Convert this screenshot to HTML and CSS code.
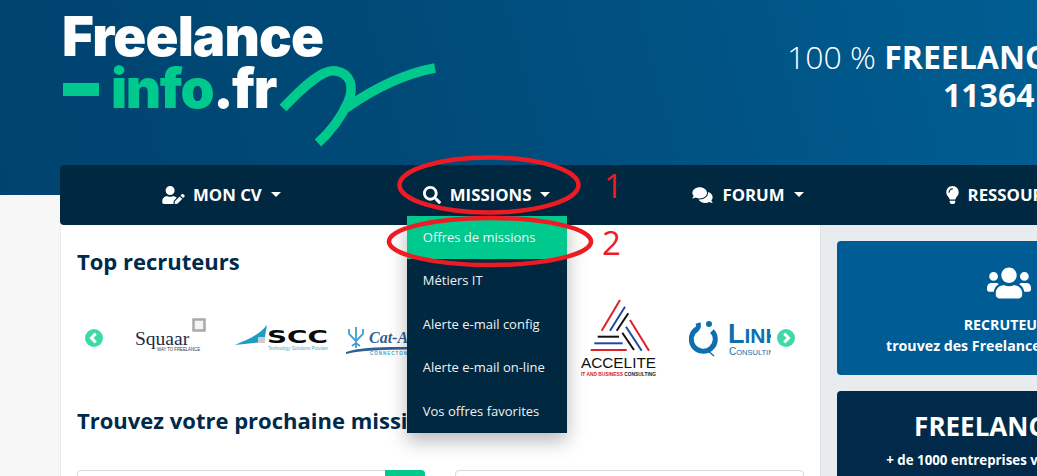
FILE: index.html
```html
<!DOCTYPE html>
<html lang="fr">
<head>
<meta charset="utf-8">
<title>Freelance-info.fr</title>
<link rel="stylesheet" href="styles.css">
</head>
<body>
<div class="page">
  <header class="top">
    <a class="logo" href="#">
      <span class="logo-line1">Freelance</span>
      <span class="logo-line2">
        <span class="logo-dash"></span><span class="logo-info">info</span><span class="logo-fr">.fr</span>
        <svg class="logo-swoosh" viewBox="0 0 160 86" fill="none" stroke="#00c98d" stroke-width="9.5">
          <path d="M5 46C25 25 45 6 58 9C74 12 76 26 70 40C63 56 52 70 40 81"/>
          <path d="M68 46C94 28 124 12 157 6"/>
        </svg>
      </span>
    </a>
    <div class="tagline">
      <div class="tag-l1">100 % <b>FREELANCE</b></div>
      <div class="tag-l2"><b>11364</b></div>
    </div>
  </header>

  <nav class="nav">
    <div class="nav-item">
      <svg class="ico ico-user" viewBox="0 0 640 512"><path d="M224 256c70.7 0 128-57.3 128-128S294.7 0 224 0 96 57.3 96 128s57.3 128 128 128zm89.6 32h-16.7c-22.2 10.2-46.9 16-72.9 16s-50.6-5.8-72.9-16h-16.7C60.2 288 0 348.2 0 422.4V464c0 26.5 21.5 48 48 48h274.9c-2.4-6.8-3.4-14-2.6-21.3l6.8-60.9 1.2-11.1 7.9-7.9 77.3-77.3c-24.5-27.7-60-45.5-99.9-45.5zm45.3 145.3l-6.8 61c-1.1 10.2 7.5 18.8 17.6 17.6l60.9-6.8 137.9-137.9-71.7-71.7-137.9 137.8zM633 268.9L595.1 231c-9.3-9.3-24.5-9.3-33.8 0l-37.8 37.8-4.1 4.1 71.8 71.7 41.8-41.8c9.3-9.4 9.3-24.5 0-33.9z"/></svg>
      <span>MON CV</span><i class="caret"></i>
    </div>
    <div class="nav-item nav-missions">
      <svg class="ico ico-search" viewBox="0 0 512 512"><path d="M505 442.7L405.3 343c-4.5-4.5-10.6-7-17-7H372c27.6-35.3 44-79.7 44-128C416 93.1 322.9 0 208 0S0 93.1 0 208s93.1 208 208 208c48.3 0 92.7-16.4 128-44v16.3c0 6.4 2.5 12.5 7 17l99.7 99.7c9.4 9.4 24.6 9.4 33.9 0l28.3-28.3c9.4-9.4 9.4-24.6.1-34zM208 336c-70.7 0-128-57.2-128-128 0-70.7 57.2-128 128-128 70.7 0 128 57.2 128 128 0 70.7-57.2 128-128 128z"/></svg>
      <span>MISSIONS</span><i class="caret"></i>
      <ul class="menu">
        <li class="menu-active">Offres de missions</li>
        <li>Métiers IT</li>
        <li>Alerte e-mail config</li>
        <li>Alerte e-mail on-line</li>
        <li>Vos offres favorites</li>
      </ul>
    </div>
    <div class="nav-item">
      <svg class="ico ico-forum" viewBox="0 0 576 512"><path d="M416 192c0-88.4-93.1-160-208-160S0 103.6 0 192c0 34.3 14.1 65.9 38 92-13.4 30.2-35.5 54.2-35.8 54.5-2.2 2.3-2.8 5.7-1.5 8.7S4.8 352 8 352c36.6 0 66.9-12.3 88.7-25 32.2 15.7 70.3 25 111.3 25 114.9 0 208-71.6 208-160zm122 220c23.9-26 38-57.7 38-92 0-66.9-53.5-124.2-129.3-148.1.9 6.6 1.3 13.3 1.3 20.1 0 105.9-107.7 192-240 192-10.8 0-21.3-.8-31.7-1.9C207.8 439.6 281.8 480 368 480c41 0 79.1-9.2 111.3-25 21.8 12.7 52.1 25 88.7 25 3.2 0 6.1-1.9 7.3-4.8 1.3-2.9.7-6.3-1.5-8.7-.3-.3-22.4-24.2-35.8-54.5z"/></svg>
      <span>FORUM</span><i class="caret"></i>
    </div>
    <div class="nav-item">
      <svg class="ico ico-bulb" viewBox="0 0 352 512"><path d="M96.06 454.35c.01 6.29 1.87 12.45 5.37 17.69l17.09 25.69a31.99 31.99 0 0 0 26.64 14.28h61.71a31.99 31.99 0 0 0 26.64-14.28l17.09-25.69a31.989 31.989 0 0 0 5.36-17.69l.04-38.35H96.01l.05 38.35zM0 176c0 44.37 16.45 84.85 43.56 115.78 16.52 18.85 42.36 58.23 52.21 91.45.04.26.07.52.11.78h160.24c.04-.26.07-.51.11-.78 9.85-33.22 35.69-72.6 52.21-91.45C335.55 260.85 352 220.37 352 176 352 78.61 272.91-.3 175.45 0 73.44.31 0 82.97 0 176zm176-80c-44.11 0-80 35.89-80 80 0 8.84-7.16 16-16 16s-16-7.16-16-16c0-61.76 50.24-112 112-112 8.84 0 16 7.16 16 16s-7.16 16-16 16z"/></svg>
      <span>RESSOURCES</span><i class="caret"></i>
    </div>
  </nav>

  <div class="content">
    <main class="panel">
      <h2 class="title">Top recruteurs</h2>
      <div class="carousel">
        <span class="arrow"><svg viewBox="0 0 18 18" fill="none" stroke="#fff" stroke-width="3"><path d="M10.8 4.6L6.4 9l4.4 4.4"/></svg></span>
        <div class="slides">
          <svg class="lg lg-squaar" viewBox="0 0 72 40">
            <rect x="58.5" y="1.5" width="11" height="11" fill="#f4f4f4" stroke="#a9a9a9" stroke-width="2.5"/>
            <text class="t-squaar" x="0" y="27">Squaar</text>
            <text class="t-squaar-s" x="22" y="33" textLength="43" lengthAdjust="spacingAndGlyphs">WAY TO FREELANCE</text>
          </svg>
          <svg class="lg lg-scc" viewBox="0 0 94 34">
            <path d="M0 25C14 19 24 15 32 5L29 22Z" fill="#1b9dc4"/>
            <rect x="23" y="17" width="7" height="6" fill="#ccc"/>
            <text class="t-scc" x="32" y="23" textLength="61" lengthAdjust="spacingAndGlyphs">SCC</text>
            <text class="t-scc-s" x="33" y="30" textLength="60" lengthAdjust="spacingAndGlyphs">Technology Solutions Provider</text>
          </svg>
          <svg class="lg lg-cat" viewBox="0 0 120 40" fill="none" stroke="#3f9fd0">
            <path d="M10 13V30M10 23L3 16V11M10 23L17 16V11M10 19V9M6 28L10 25L14 28" stroke-width="1.8"/>
            <path d="M0 34C20 27 60 29 120 30V32C60 31 20 31 0 36Z" fill="#2f5f96" stroke="none"/>
            <text class="t-cat" x="23" y="25">Cat-Amania</text>
            <text class="t-cat-s" x="24" y="37">CONNECTONS NOS TALENTS</text>
          </svg>
          <svg class="lg lg-acc" viewBox="0 0 78 78" fill="none" stroke-width="2">
            <path d="M40 1L21.7 31.7" stroke="#d9222a"/>
            <path d="M45 7.7L30 31.7" stroke="#1f4b9c"/>
            <path d="M48.3 14.3L36.7 31.7" stroke="#111"/>
            <path d="M50 21L69 51.7" stroke="#d9222a"/>
            <path d="M46 27.7L61.7 51.7" stroke="#1f4b9c"/>
            <path d="M42.3 33.7L54 51" stroke="#111"/>
            <path d="M17.7 37.7H39" stroke="#111"/>
            <path d="M14.3 44.3H42.7" stroke="#1f4b9c"/>
            <path d="M10.7 51H46.7" stroke="#d9222a"/>
            <text class="t-acc" x="1" y="69" textLength="75" lengthAdjust="spacingAndGlyphs">ACCELITE</text>
            <text class="t-acc-s" x="1" y="77" textLength="75" lengthAdjust="spacingAndGlyphs"><tspan class="t-red">IT AND BUSINESS</tspan> CONSULTING</text>
          </svg>
          <svg class="lg lg-link" viewBox="0 0 84 40" fill="none">
            <path d="M9 6C10 9 10 10 8 12A12 12 0 1 0 23 14" stroke="#0d6fae" stroke-width="5"/>
            <path d="M18 33L25 39" stroke="#0d6fae" stroke-width="1.5"/>
            <circle cx="20" cy="7" r="3" fill="#0d6fae"/>
            <text class="t-link" x="39" y="26">L<tspan class="t-link-m">INK</tspan></text>
            <text class="t-link-s" x="40" y="38">C<tspan class="t-link-n">ONSULTING</tspan></text>
          </svg>
        </div>
        <span class="arrow"><svg viewBox="0 0 18 18" fill="none" stroke="#fff" stroke-width="3"><path d="M7.2 4.6L11.6 9l-4.4 4.4"/></svg></span>
      </div>
      <h2 class="title title-2">Trouvez votre prochaine mission</h2>
      <div class="search">
        <div class="field"><span class="field-btn"></span></div>
        <div class="field field-wide"></div>
      </div>
    </main>
    <aside class="side">
      <section class="card card-blue">
        <svg class="ico-users" viewBox="0 0 640 512"><path d="M96 224c35.3 0 64-28.7 64-64s-28.7-64-64-64-64 28.7-64 64 28.7 64 64 64zm448 0c35.3 0 64-28.7 64-64s-28.7-64-64-64-64 28.7-64 64 28.7 64 64 64zm32 32h-64c-17.6 0-33.5 7.1-45.1 18.6 40.3 22.1 68.9 62 75.1 109.4h66c17.7 0 32-14.3 32-32v-32c0-35.3-28.7-64-64-64zm-256 0c61.9 0 112-50.1 112-112S381.9 32 320 32 208 82.1 208 144s50.1 112 112 112zm76.8 32h-8.3c-20.8 10-43.9 16-68.5 16s-47.6-6-68.5-16h-8.3C179.6 288 128 339.6 128 403.2V432c0 26.5 21.5 48 48 48h288c26.5 0 48-21.5 48-48v-28.8c0-63.6-51.6-115.2-115.2-115.2zm-223.7-13.4C161.5 263.1 145.6 256 128 256H64c-35.3 0-64 28.7-64 64v32c0 17.7 14.3 32 32 32h65.9c6.3-47.4 34.9-87.3 75.2-109.4z"/></svg>
        <p class="card-l1">RECRUTEURS</p>
        <p class="card-l2">trouvez des Freelances disponibles</p>
      </section>
      <section class="card card-dark">
        <p class="card-big">FREELANCES</p>
        <p class="card-l3">+ de 1000 entreprises vous attendent</p>
      </section>
    </aside>
  </div>

  <svg class="marks" viewBox="0 0 1037 476" fill="none">
    <ellipse cx="489" cy="185" rx="89.5" ry="27.5"/>
    <ellipse cx="490" cy="241.5" rx="101" ry="23.5"/>
    <text class="mark-n" x="604" y="198">1</text>
    <text class="mark-n" x="602" y="255">2</text>
  </svg>
</div>
</body>
</html>
```
FILE: styles.css
```css
* { box-sizing: border-box; }
html, body { margin: 0; padding: 0; }
body {
  background: #f7f7f7;
  font-family: "Open Sans", "Liberation Sans", sans-serif;
  color: #fff;
}
.page {
  position: relative;
  width: 1037px;
  height: 476px;
  overflow: hidden;
}

/* header */
.top {
  display: flex;
  height: 195px;
  padding: 10px 0 0 60px;
  background: linear-gradient(75deg, #00436f 0%, #004a78 40%, #005e92 100%);
}
.logo {
  display: flex;
  flex-direction: column;
  width: 380px;
  flex: none;
  text-decoration: none;
  font-family: Inter, "Liberation Sans", sans-serif;
  font-weight: 900;
  font-size: 54.5px;
  letter-spacing: -0.9px;
  line-height: 52px;
  color: #fff;
}
.logo-line1 { padding-left: 2px; }
.logo-line2 {
  display: flex;
  align-items: flex-start;
  padding-left: 3px;
  letter-spacing: -1.4px;
}
.logo-dash {
  width: 36px;
  height: 13px;
  flex: none;
  margin: 21px 12px 0 0;
  background: #00c98d;
}
.logo-info { color: #00c98d; }
.logo-fr { color: #fff; }
.logo-swoosh {
  width: 160px;
  height: 86px;
  margin-left: 2px;
  flex: none;
}
.tagline {
  margin: 28px 0 0 347px;
  font-size: 32px;
  line-height: 38px;
  font-weight: 300;
  white-space: nowrap;
}
.tagline b { font-weight: 700; }
.tag-l2 { padding-left: 156px; }

/* navigation */
.nav {
  position: relative;
  z-index: 2;
  display: flex;
  gap: 142px;
  width: 1200px;
  height: 60px;
  margin: -30px 0 0 60px;
  padding-left: 102px;
  background: #002840;
  border-radius: 4px;
}
.nav-item {
  position: relative;
  display: flex;
  align-items: center;
  height: 60px;
  padding-bottom: 1px;
  flex: none;
  font-size: 16.8px;
  font-weight: 700;
  white-space: nowrap;
}
.ico { fill: #fff; height: 18px; flex: none; }
.ico-user { width: 23px; margin-right: 8px; }
.ico-search { width: 18px; height: 18px; margin-right: 9px; }
.ico-forum { width: 21px; margin-right: 9px; }
.ico-bulb { width: 13px; margin-right: 9px; }
.caret {
  width: 0;
  height: 0;
  margin-left: 9px;
  border-left: 5px solid transparent;
  border-right: 5px solid transparent;
  border-top: 5px solid #fff;
}

/* dropdown */
.menu {
  position: absolute;
  top: 51px;
  left: -16px;
  width: 160px;
  margin: 0;
  padding: 0;
  list-style: none;
  background: #002840;
  box-shadow: 0 8px 18px rgba(0, 0, 0, .28);
  font-size: 13px;
  font-weight: 400;
}
.menu li {
  padding: 13px 16px;
  height: 43.4px;
  line-height: 17.4px;
  color: #f0f2f4;
}
.menu .menu-active { background: #00c98d; }

/* content */
.content {
  display: flex;
  width: 1138px;
  margin-left: 60px;
  height: 251px;
}
.panel {
  width: 760px;
  flex: none;
  background: #fff;
  border-left: 1px solid #e9ecef;
  padding: 22px 16px 0;
  overflow: hidden;
}
.title {
  margin: 0;
  font-size: 22px;
  line-height: 28px;
  font-weight: 700;
  color: #002a4a;
  white-space: nowrap;
}
.title-2 { margin-top: 20px; }

.carousel {
  display: flex;
  align-items: center;
  height: 96px;
  margin-top: 15px;
}
.arrow {
  width: 18px;
  height: 18px;
  flex: none;
  border-radius: 50%;
  background: #3fd8a8;
  display: flex;
}
.arrow:first-child { margin-left: 8px; }
.arrow:last-child { margin-left: 6px; }
.arrow svg { width: 18px; height: 18px; }
.slides {
  display: flex;
  align-items: center;
  width: 668px;
  height: 96px;
  flex: none;
  overflow: hidden;
  padding-left: 32px;
}
.lg { flex: none; display: block; }
.lg-squaar { width: 72px; height: 40px; margin-top: -1px; }
.lg-scc { width: 94px; height: 34px; margin-left: 28px; margin-top: -2px; }
.lg-cat { width: 120px; height: 40px; margin-left: 17px; margin-top: -1px; }
.lg-acc { width: 78px; height: 78px; margin-left: 114px; }
.lg-link { width: 84px; height: 40px; margin-left: 31px; margin-top: -2px; }

.t-squaar { font: 19.5px "Liberation Serif", serif; fill: #1d2b44; }
.t-squaar-s { font: 5px "Liberation Sans", sans-serif; fill: #33384a; }
.t-scc { font: 900 18px "DejaVu Sans", sans-serif; fill: #0a0a0a; }
.t-scc-s { font: 5px "Liberation Sans", sans-serif; fill: #3fa9d6; }
.t-cat { font: italic 700 16px "Liberation Serif", serif; fill: #2f5f96; stroke: none; }
.t-cat-s { font: 700 4.5px "Liberation Sans", sans-serif; fill: #3f9fd0; stroke: none; letter-spacing: 1px; }
.t-acc { font: 15.5px "Liberation Sans", sans-serif; fill: #111; stroke: none; }
.t-acc-s { font: 700 5px "Liberation Sans", sans-serif; fill: #222; stroke: none; }
.t-red { fill: #d9222a; }
.t-link { font: 700 27px "Liberation Sans", sans-serif; fill: #0d6fae; }
.t-link-m { font-size: 21px; }
.t-link-s { font: 10px "Liberation Sans", sans-serif; fill: #0d6fae; }
.t-link-n { font-size: 7.5px; }

.search {
  display: flex;
  gap: 30px;
  margin-top: 36px;
}
.field {
  position: relative;
  width: 348px;
  height: 40px;
  background: #fff;
  border: 1px solid #d8d8d8;
  border-radius: 4px;
  display: flex;
  justify-content: flex-end;
}
.field-wide { width: 349px; }
.field-btn {
  width: 40px;
  margin: -1px -1px 0 0;
  background: #00c98d;
  border-radius: 0 4px 4px 0;
}

/* sidebar */
.side {
  width: 378px;
  flex: none;
  background: #e9ecef;
  border-left: 1px solid #e0e3e6;
  padding: 16px 17px 0 16px;
  display: flex;
  flex-direction: column;
  gap: 16px;
}
.card {
  width: 344px;
  border-radius: 4px;
  text-align: center;
  flex: none;
}
.card p { margin: 0; white-space: nowrap; font-weight: 700; }
.card-blue { background: #005c94; height: 134px; padding-top: 24px; }
.card-dark { background: #012a4a; height: 180px; padding-top: 17px; }
.ico-users { width: 44px; height: 36px; fill: #fff; display: block; margin: 0 auto; }
.card .card-l1 { font-size: 14.2px; line-height: 20px; margin-top: 14px; }
.card .card-l2 { font-size: 14.2px; line-height: 22px; }
.card .card-big { font-size: 26px; line-height: 36px; padding-right: 30px; }
.card .card-l3 { font-size: 13.3px; line-height: 20px; margin-top: 6px; }

/* red annotations drawn over the capture */
.marks {
  position: absolute;
  top: 0;
  left: 0;
  z-index: 5;
  width: 1037px;
  height: 476px;
  pointer-events: none;
}
.marks ellipse { stroke: #ed1c24; stroke-width: 4.5; }
.mark-n { font: 400 33px "Open Sans", sans-serif; fill: #ed1c24; }
```
